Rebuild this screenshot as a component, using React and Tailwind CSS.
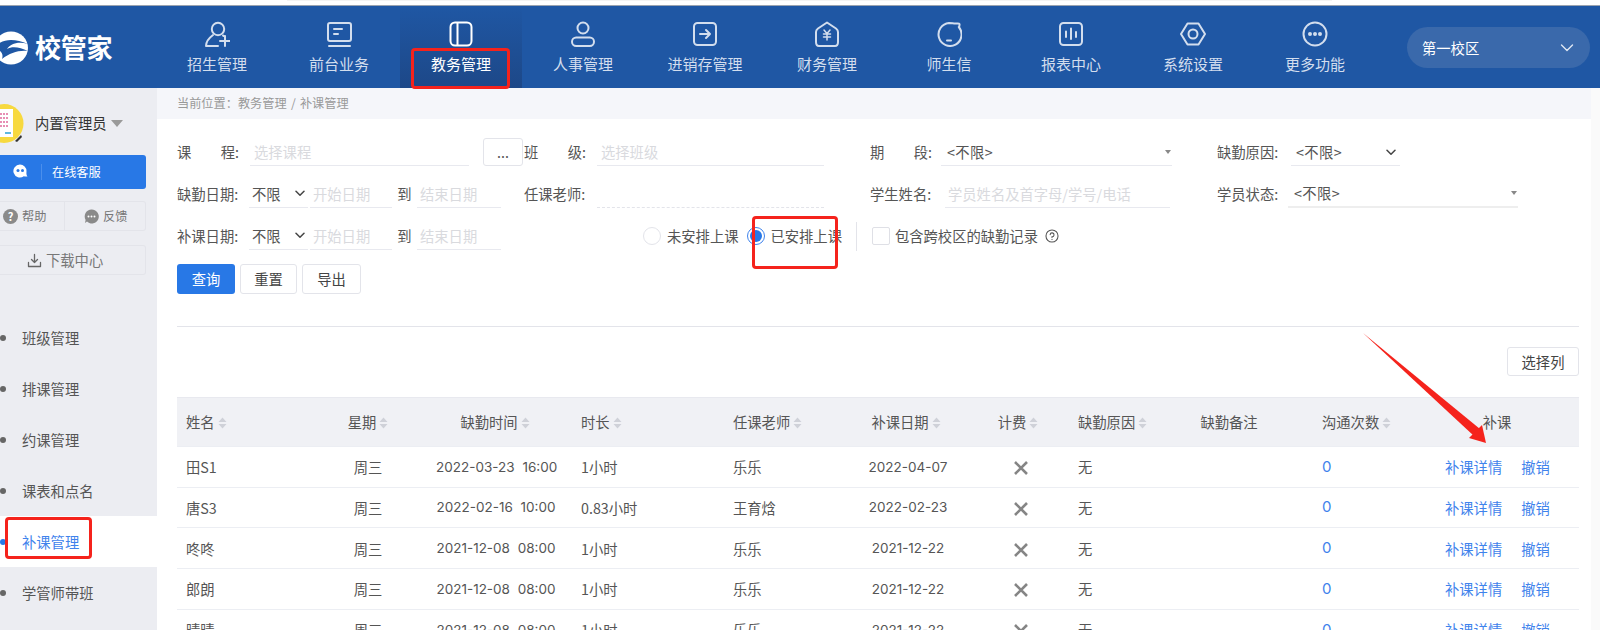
const FONT = "font-['Noto_Sans_CJK_SC','Noto_Sans',sans-serif]";
const NUM = "font-['Inter','Noto_Sans_CJK_SC',sans-serif] text-[13.5px]";

const ic = { fill: 'none', stroke: 'currentColor', strokeWidth: 2, strokeLinecap: 'round', strokeLinejoin: 'round' };

const icons = {
  enroll: (
    <>
      <circle cx="14" cy="8" r="6.2" />
      <path d="M9 14 C5 17 2 20 2 25 H14" />
      <path d="M19 14.5 C20 15 21 15.5 21 16" />
      <path d="M17 23 H27 M22 18 V28" transform="translate(-1 -3)" />
    </>
  ),
  front: (
    <>
      <rect x="2" y="2" width="23" height="18" rx="2" />
      <path d="M8 8 H16 M8 13 H12 M3 25 H24" />
    </>
  ),
  edu: (
    <>
      <rect x="2.5" y="1.5" width="21" height="23" rx="4.5" />
      <path d="M9.5 2 V24" />
    </>
  ),
  staff: (
    <>
      <circle cx="13" cy="7" r="5.5" />
      <rect x="2" y="16.5" width="22" height="8.5" rx="4.2" />
    </>
  ),
  stock: (
    <>
      <rect x="2" y="2" width="22" height="22" rx="3.5" />
      <path d="M8 13 H18 M14 9 L18 13 L14 17" />
    </>
  ),
  money: (
    <>
      <path d="M13 1.5 L22 7.5 Q24 9 24 11 V21 Q24 25 21 25 H5 Q2 25 2 21 V11 Q2 9 4 7.5 Z" />
      <path d="M10 9 L13 12.5 L16 9 M9.5 13 H16.5 M9.5 16 H16.5 M13 12.5 V19" strokeWidth="1.5" />
    </>
  ),
  chat: (
    <>
      <path d="M13 2 C16 2 18.5 3 20.5 2.5 Q24 2 23.5 4 Q23.5 5.5 22.8 6 A11.5 11.5 0 1 1 13 2 Z" />
      <path d="M11 19.5 H15" />
    </>
  ),
  report: (
    <>
      <rect x="2" y="2" width="22" height="22" rx="3.5" />
      <path d="M8 10.5 V16 M13 7.5 V18 M18 11 V16" />
    </>
  ),
  settings: (
    <>
      <path d="M7.5 2.5 H18.5 L25 13 L18.5 23.5 H7.5 L1 13 Z" />
      <circle cx="13" cy="13" r="4.5" />
    </>
  ),
  more: (
    <>
      <circle cx="13" cy="13" r="11.5" />
      <circle cx="8" cy="13" r="1" fill="currentColor" />
      <circle cx="13" cy="13" r="1" fill="currentColor" />
      <circle cx="18" cy="13" r="1" fill="currentColor" />
    </>
  ),
};

const navItems = [
  ['招生管理', 'enroll'],
  ['前台业务', 'front'],
  ['教务管理', 'edu', true],
  ['人事管理', 'staff'],
  ['进销存管理', 'stock'],
  ['财务管理', 'money'],
  ['师生信', 'chat'],
  ['报表中心', 'report'],
  ['系统设置', 'settings'],
  ['更多功能', 'more'],
];

function NavItem({ label, icon, active }) {
  return (
    <div
      className={
        'w-[122px] h-full flex flex-col items-center pt-[15px] ' +
        (active ? 'bg-gradient-to-b from-[#1f57a4] to-[#1d4888] text-white' : 'text-[#d3deee]')
      }
    >
      <svg width="26" height="26" viewBox="0 0 26 26" {...ic}>
        {icons[icon]}
      </svg>
      <span className="text-[15px] leading-5 mt-[7px]">{label}</span>
    </div>
  );
}

function Logo() {
  return (
    <div className="w-[156px] h-full flex items-center overflow-hidden">
      <svg width="31" height="34" viewBox="0 0 31 34" className="shrink-0 ml-[-2px] mt-[2px]">
        <ellipse cx="13" cy="17" rx="17" ry="16.5" fill="#fff" />
        <path d="M-4 17 C4 7 16 7 30 13 C20 10 12 13 9 18 C14 15 22 16 30 20 C20 19 12 22 4 28 C6 22 2 19 -4 17 Z" fill="#1f57a4" />
      </svg>
      <span className="text-[26px] font-bold text-white ml-[6px] leading-none tracking-[-0.2px]">校管家</span>
    </div>
  );
}

function Header() {
  return (
    <div className="h-[82px] bg-[#1f57a4] flex items-stretch">
      <Logo />
      {navItems.map(([l, i, a]) => (
        <NavItem key={l} label={l} icon={i} active={a} />
      ))}
      <div className="ml-[31px] mt-[21px] w-[183px] h-[41px] rounded-full bg-[#3a69ab] flex items-center justify-between pl-[15px] pr-[16px] text-white text-[14.3px]">
        <span>第一校区</span>
        <svg width="14" height="14" viewBox="0 0 14 14" fill="none" stroke="#dfe7f3" strokeWidth="1.4" strokeLinecap="round" strokeLinejoin="round">
          <path d="M1.5 4 L7 9.5 L12.5 4" />
        </svg>
      </div>
    </div>
  );
}

const menu = ['班级管理', '排课管理', '约课管理', '课表和点名', '补课管理', '学管师带班'];

function Sidebar() {
  return (
    <div className="w-[157px] bg-[#ecedf2] shrink-0">
      <div className="flex items-center h-[39px] mt-[16px]">
        <svg width="24" height="39" viewBox="0 0 24 39" className="shrink-0">
          <circle cx="4" cy="19.5" r="19.5" fill="#f7d93f" />
          <rect x="-6" y="5" width="19" height="28" fill="#fff" />
          <path d="M0 10 H9 M0 14 H9 M0 18 H9 M0 22 H9" stroke="#e06a9c" strokeWidth="1.6" strokeDasharray="2 1" />
          <path d="M5 29 H11" stroke="#36a7d8" strokeWidth="1.6" />
          <path d="M15 37 L21 31 L22 33 L17 38 Z" fill="#333" />
        </svg>
        <span className="ml-[11px] mb-[1px] text-[14.3px] text-[#333]">内置管理员</span>
        <span className="ml-[5px] w-0 h-0 border-l-[6px] border-r-[6px] border-t-[7px] border-l-transparent border-r-transparent border-t-[#9a9a9a]" />
      </div>
      <div className="mt-[12px] w-[146px] h-[34px] bg-[#2878e6] rounded-r-[3px] flex items-center text-white">
        <svg width="15" height="16" viewBox="0 0 15 16" className="ml-[13px] shrink-0">
          <path d="M7 0.5 A6.5 6.5 0 0 1 13.5 7 C13.5 9 13 10.5 14.5 12.5 C13 12.8 11.8 12.4 10.8 12.2 A6.5 6.5 0 1 1 7 0.5 Z" fill="#fff" />
          <circle cx="5" cy="6.5" r="1.5" fill="#2878e6" />
          <circle cx="9.5" cy="6.5" r="1.5" fill="#2878e6" />
        </svg>
        <span className="ml-[13px] w-px h-[16px] bg-[#4b8fec]" />
        <span className="ml-[10px] text-[12.2px]">在线客服</span>
      </div>
      <div className="mt-[12px] w-[146px] h-[30px] border border-l-0 border-[#e3e4ea] rounded-r-[3px] flex items-center text-[12.2px] text-[#777]">
        <div className="w-[65px] h-full flex items-center border-r border-[#e3e4ea] pl-[3px]">
          <span className="w-[15px] h-[15px] rounded-full bg-[#8a8a8a] text-white text-[11px] font-bold leading-[15px] text-center">?</span>
          <span className="ml-[4px]">帮助</span>
        </div>
        <div className="flex-1 h-full flex items-center pl-[19px]">
          <svg width="15" height="15" viewBox="0 0 15 15" className="shrink-0">
            <path d="M7.5 0.5 A7 7 0 1 1 3 12.6 L1 14 L1.6 11 A7 7 0 0 1 7.5 0.5 Z" fill="#8a8a8a" />
            <circle cx="4.5" cy="7.5" r="1" fill="#fff" />
            <circle cx="7.5" cy="7.5" r="1" fill="#fff" />
            <circle cx="10.5" cy="7.5" r="1" fill="#fff" />
          </svg>
          <span className="ml-[4px]">反馈</span>
        </div>
      </div>
      <div className="mt-[14px] w-[146px] h-[30px] border border-l-0 border-[#e3e4ea] rounded-r-[3px] flex items-center pl-[27px] text-[14.3px] text-[#777]">
        <svg width="15" height="15" viewBox="0 0 15 15" fill="none" stroke="#666" strokeWidth="1.3" strokeLinecap="round" strokeLinejoin="round" className="shrink-0">
          <path d="M7.5 1.5 V9.5 M4.5 6.5 L7.5 9.5 L10.5 6.5 M1.5 9.5 V13.5 H13.5 V9.5" />
        </svg>
        <span className="ml-[4px]">下载中心</span>
      </div>
      <div className="mt-[37px]">
        {menu.map((m) => {
          const active = m === '补课管理';
          return (
            <div key={m} className={'h-[51px] flex items-center text-[14.3px] ' + (active ? 'bg-white text-[#3f83ec]' : 'text-[#555]')}>
              <span className={'w-[6px] h-[6px] rounded-full ' + (active ? 'bg-[#2878e6]' : 'bg-[#666]')} />
              <span className="ml-[16px]">{m}</span>
            </div>
          );
        })}
      </div>
    </div>
  );
}

function Label({ a, b, text, className = '' }) {
  if (text) return <span className={'w-[73px] shrink-0 text-[14.3px] text-[#555] ' + className}>{text}:</span>;
  return (
    <span className={'w-[73px] shrink-0 pr-[11px] flex justify-between text-[14.3px] text-[#555] ' + className}>
      <span>{a}</span>
      <span>{b}:</span>
    </span>
  );
}

function Field({ w, children, className = '', dashed }) {
  return (
    <div
      className={
        'h-[28px] flex items-center text-[14.3px] shrink-0 border-b ' +
        (dashed ? 'border-dashed border-[#e3e4ea] ' : 'border-[#e8e9ef] ') +
        w + ' ' + className
      }
    >
      {children}
    </div>
  );
}

const Ph = ({ children }) => <span className="text-[#d9dade] text-[14.3px]">{children}</span>;

function Chevron({ className = '' }) {
  return (
    <svg width="10" height="7" viewBox="0 0 10 7" fill="none" stroke="#444" strokeWidth="1.5" strokeLinecap="round" strokeLinejoin="round" className={className}>
      <path d="M1 1.2 L5 5.2 L9 1.2" />
    </svg>
  );
}

const Caret = () => <span className="w-0 h-0 border-l-[3px] border-r-[3px] border-t-[4px] border-l-transparent border-r-transparent border-t-[#888]" />;

function DateRange() {
  return (
    <>
      <Field w="w-[59px]" className="justify-between pl-[3px] pr-[2px] text-[#555] ml-[-1px]">
        <span>不限</span>
        <Chevron className="mr-[1px]" />
      </Field>
      <Field w="w-[82px]" className="ml-[2px] pl-[3px]">
        <Ph>开始日期</Ph>
      </Field>
      <span className="w-[25px] text-center text-[14.3px] text-[#555]">到</span>
      <Field w="w-[84px]" className="pl-[3px]">
        <Ph>结束日期</Ph>
      </Field>
    </>
  );
}

function Filters() {
  return (
    <div className="pt-[12px] pl-[20px]">
      <div className="h-[42px] flex items-center">
        <Label a="课" b="程" />
        <Field w="w-[219px]" className="pl-[4px] pt-[1px]">
          <Ph>选择课程</Ph>
        </Field>
        <div className="ml-[14px] w-[40px] h-[28px] border border-[#e3e4ea] rounded-[3px] text-center text-[14.3px] text-[#555] leading-[26px] shrink-0">...</div>
        <Label a="班" b="级" className="ml-[1px]" />
        <Field w="w-[227px]" className="pl-[4px] pt-[1px]">
          <Ph>选择班级</Ph>
        </Field>
        <Label a="期" b="段" className="ml-[46px]" />
        <Field w="w-[231px]" className="justify-between pl-[6px] pr-[1px] pt-[1px] text-[#555] ml-[-2px]">
          <span className="tracking-[0.4px]">&lt;不限&gt;</span>
          <Caret />
        </Field>
        <span className="ml-[45px] w-[74px] text-[14.3px] text-[#555]">缺勤原因:</span>
        <Field w="w-[109px]" className="justify-between pl-[5px] pr-[4px] pt-[1px] text-[#555]">
          <span className="tracking-[0.4px]">&lt;不限&gt;</span>
          <Chevron />
        </Field>
      </div>
      <div className="h-[42px] flex items-center">
        <Label text="缺勤日期" />
        <DateRange />
        <Label text="任课老师" className="ml-[23px]" />
        <Field w="w-[227px]" dashed />
        <span className="ml-[46px] w-[75px] text-[14.3px] text-[#555]">学生姓名:</span>
        <Field w="w-[225px]" className="pl-[3px]">
          <Ph>学员姓名及首字母/学号/电话</Ph>
        </Field>
        <span className="ml-[47px] w-[71px] text-[14.3px] text-[#555]">学员状态:</span>
        <Field w="w-[230px]" className="justify-between pl-[6px] pr-[1px] text-[#555] border-b-2 border-[#eeeeee]">
          <span className="tracking-[0.4px]">&lt;不限&gt;</span>
          <Caret />
        </Field>
      </div>
      <div className="h-[42px] flex items-center text-[14.3px] text-[#555]">
        <Label text="补课日期" />
        <DateRange />
        <span className="ml-[142px] w-[18px] h-[18px] rounded-full border border-[#e3e4ea] shrink-0" />
        <span className="ml-[6px]">未安排上课</span>
        <span className="ml-[9px] w-[18px] h-[18px] rounded-full border border-[#3f83ec] flex items-center justify-center shrink-0">
          <span className="w-[12px] h-[12px] rounded-full bg-[#2878e6]" />
        </span>
        <span className="ml-[5px]">已安排上课</span>
        <span className="ml-[14px] w-px h-[29px] bg-[#e3e4ea]" />
        <span className="ml-[15px] w-[18px] h-[18px] border border-[#dfe0e6] rounded-[2px] shrink-0" />
        <span className="ml-[5px]">包含跨校区的缺勤记录</span>
        <svg width="14" height="14" viewBox="0 0 13 13" fill="none" stroke="#555" strokeWidth="1" strokeLinecap="round" className="ml-[7px]">
          <circle cx="6.5" cy="6.5" r="5.6" />
          <path d="M4.8 5.2 A1.8 1.8 0 1 1 6.5 7.2 V7.8 M6.5 9.6 V9.7" />
        </svg>
      </div>
      <div className="mt-[7px] h-[30px] flex text-[14.3px]">
        <div className="w-[58px] bg-[#2878e6] rounded-[3px] text-white flex items-center justify-center">查询</div>
        <div className="ml-[5px] w-[57px] border border-[#e3e4ea] rounded-[3px] text-[#444] flex items-center justify-center">重置</div>
        <div className="ml-[5px] w-[59px] border border-[#e3e4ea] rounded-[3px] text-[#444] flex items-center justify-center">导出</div>
      </div>
      <div className="mt-[32px] w-[1402px] h-px bg-[#e3e4ea]" />
      <div className="mt-[20px] w-[1402px] flex justify-end">
        <div className="w-[72px] h-[29px] border border-[#e3e4ea] rounded-[3px] text-[14.3px] text-[#444] flex items-center justify-center">选择列</div>
      </div>
    </div>
  );
}

function Sort() {
  return (
    <svg width="9" height="12" viewBox="0 0 9 12" fill="#cfd1d8" className="inline-block ml-[3px] align-[-1px]">
      <path d="M4.5 0.5 L8.5 5 H0.5 Z M4.5 11.5 L8.5 7 H0.5 Z" />
    </svg>
  );
}

function Cross() {
  return (
    <svg width="16" height="16" viewBox="0 0 16 16" fill="none" stroke="#858585" strokeWidth="2.6" className="inline-block align-middle">
      <path d="M2 2 L14 14 M14 2 L2 14" />
    </svg>
  );
}

const rows = [
  ['田S1', '2022-03-23 16:00', '1小时', '乐乐', '2022-04-07'],
  ['唐S3', '2022-02-16 10:00', '0.83小时', '王育焓', '2022-02-23'],
  ['咚咚', '2021-12-08 08:00', '1小时', '乐乐', '2021-12-22'],
  ['郎朗', '2021-12-08 08:00', '1小时', '乐乐', '2021-12-22'],
  ['晴晴', '2021-12-08 08:00', '1小时', '乐乐', '2021-12-22'],
];

const frozen = 'relative shadow-[5px_0_6px_-3px_rgba(0,0,0,0.07)] pl-[9px]';

function DataTable() {
  return (
    <table className="mt-[21px] ml-[20px] w-[1402px] table-fixed border-collapse text-[14.3px] text-[#555]">
      <colgroup>
        <col className="w-[123px]" />
        <col className="w-[136px]" />
        <col className="w-[120px]" />
        <col className="w-[177px]" />
        <col className="w-[119px]" />
        <col className="w-[112px]" />
        <col className="w-[114px]" />
        <col className="w-[92px]" />
        <col className="w-[118px]" />
        <col className="w-[134px]" />
        <col className="w-[157px]" />
      </colgroup>
      <thead>
        <tr className="h-[49px] bg-[#f0f1f5] border-t border-[#e8e9ef] font-normal">
          <th className={'font-normal text-left bg-[#f0f1f5] ' + frozen}>姓名<Sort /></th>
          <th className="font-normal text-center">星期<Sort /></th>
          <th className="font-normal text-center whitespace-nowrap pr-[2px]">缺勤时间<Sort /></th>
          <th className="font-normal text-left pl-[25px]">时长<Sort /></th>
          <th className="font-normal text-left">任课老师<Sort /></th>
          <th className="font-normal text-center whitespace-nowrap pr-[4px]">补课日期<Sort /></th>
          <th className="font-normal text-center pr-[6px]">计费<Sort /></th>
          <th className="font-normal text-left">缺勤原因<Sort /></th>
          <th className="font-normal text-center">缺勤备注</th>
          <th className="font-normal text-left pl-[34px]">沟通次数<Sort /></th>
          <th className="font-normal text-center pr-[7px]">补课</th>
        </tr>
      </thead>
      <tbody>
        {rows.map((r) => (
          <tr key={r[0]} className="h-[40.7px] border-t border-[#eceef3]">
            <td className={'bg-white ' + frozen}>{r[0]}</td>
            <td className="text-center">周三</td>
            <td className={'text-center whitespace-nowrap [word-spacing:4px] ' + NUM}>{r[1]}</td>
            <td className="pl-[25px]">{r[2]}</td>
            <td>{r[3]}</td>
            <td className={'text-center ' + NUM}>{r[4]}</td>
            <td className="text-center pb-[2px]"><Cross /></td>
            <td>无</td>
            <td />
            <td className="pl-[34px] text-[#3f83ec] font-['Inter','Noto_Sans_CJK_SC',sans-serif] text-[15px]">0</td>
            <td className="pl-[23px] text-[#3f83ec] whitespace-nowrap">
              <span>补课详情</span>
              <span className="ml-[19px]">撤销</span>
            </td>
          </tr>
        ))}
      </tbody>
    </table>
  );
}

function Annotations() {
  return (
    <>
      <div className="absolute left-[411px] top-[48px] w-[99px] h-[41px] border-[3px] border-[#f5231c] rounded-[4px]" />
      <div className="absolute left-[752px] top-[216px] w-[86px] h-[53px] border-[3px] border-[#f5231c] rounded-[4px]" />
      <div className="absolute left-[5px] top-[517px] w-[87px] h-[42px] border-[3px] border-[#f5231c] rounded-[4px]" />
      <svg className="absolute left-[1360px] top-[328px]" width="135" height="122" viewBox="0 0 135 122">
        <path d="M3 5 L120 101 L114 108 Z" fill="#f5231c" />
        <path d="M126 115 L109 110 L122 97 Z" fill="#f5231c" />
      </svg>
    </>
  );
}

export default function App() {
  return (
    <div className={'relative w-[1600px] h-[630px] overflow-hidden bg-white ' + FONT}>
      <div className="h-[6px] bg-white border-b border-[#9aa3b0]">
        <div className="ml-[287px] w-[1045px] h-px bg-[#f3f3f3]" />
      </div>
      <Header />
      <div className="flex h-[542px]">
        <Sidebar />
        <div className="flex-1 min-w-0">
          <div className="h-[31px] bg-[#f5f6fa] pl-[20px] flex items-center text-[12.2px] text-[#999] [word-spacing:1.5px]">
            当前位置：教务管理 / 补课管理
          </div>
          <Filters />
          <DataTable />
        </div>
        <div className="w-[9px] shrink-0 bg-[#fafafa]" />
      </div>
      <Annotations />
    </div>
  );
}
